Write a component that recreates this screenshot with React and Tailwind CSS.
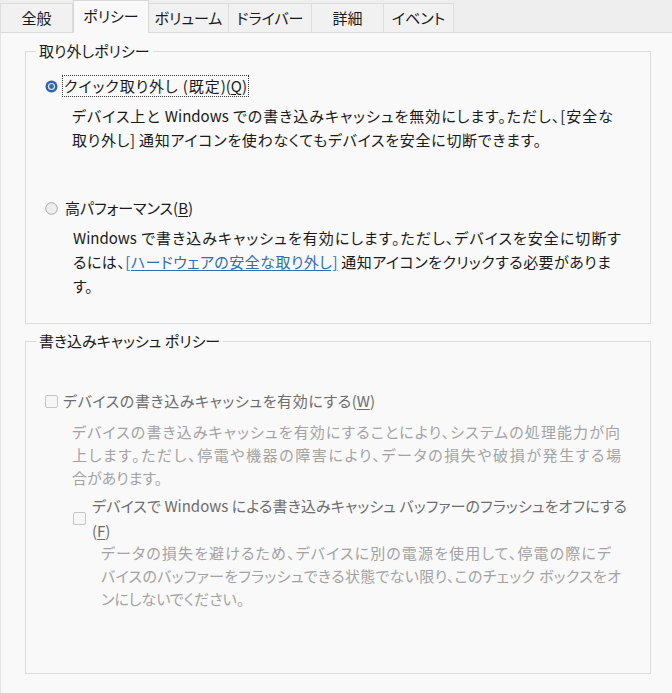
import React from 'react';

function Radio({ checked }) {
  if (checked) {
    return (
      <svg width="13" height="13" viewBox="0 0 13 13" className="shrink-0">
        <circle cx="6.5" cy="6.5" r="6" fill="#2d64a8" />
        <circle cx="6.5" cy="6.5" r="3.6" fill="#dfe9f5" />
        <circle cx="6.5" cy="6.5" r="2.4" fill="#2f6fba" />
      </svg>
    );
  }
  return (
    <svg width="13" height="13" viewBox="0 0 13 13" className="shrink-0">
      <circle cx="6.5" cy="6.5" r="5.8" fill="#ededed" stroke="#a9a9a9" strokeWidth="1" />
    </svg>
  );
}

function Check() {
  return <span className="block h-[13px] w-[13px] shrink-0 rounded-[2px] border border-[#c6c6c6] bg-[#f6f6f6]" />;
}

function Line({ w, children }) {
  return <span className={`block ${w} [text-align-last:justify]`}>{children}</span>;
}

const tabs = [
  { label: '全般', cls: 'w-[73px] border-l' },
  { label: 'ポリシー', cls: 'w-[76px]', active: true },
  { label: 'ボリューム', cls: 'w-[80px]' },
  { label: 'ドライバー', cls: 'w-[83px]' },
  { label: '詳細', cls: 'w-[72px]' },
  { label: 'イベント', cls: 'w-[70px]' },
];

export default function App() {
  return (
    <div
      className="h-[693px] w-[672px] overflow-hidden bg-[#f9f9f9] text-[15px] text-[#1a1a1a] [font-feature-settings:'palt']"
      style={{ fontFamily: "'Noto Sans CJK JP', 'Noto Sans', sans-serif" }}
    >
      <div className="flex h-[33px] items-end border-b border-[#dadada] bg-[#eeeeee]">
        {tabs.map((t) =>
          t.active ? (
            <div
              key={t.label}
              className={`${t.cls} -mb-px flex h-[33px] items-center justify-center border-x border-t border-[#d8d8d8] bg-[#f9f9f9] pb-[2px]`}
            >
              {t.label}
            </div>
          ) : (
            <div
              key={t.label}
              className={`${t.cls} flex h-[29px] items-center justify-center border-r border-t border-[#dcdcdc] bg-[#f1f1f1]`}
            >
              {t.label}
            </div>
          )
        )}
      </div>

      <div className="h-[660px] border-l border-[#e4e4e4] pl-[24px] pt-[8px]">
        <fieldset className="w-[626px] border border-[#dcdcdc]">
          <legend className="ml-[10px] px-[3px] leading-[20px]">取り外しポリシー</legend>
          <div className="pb-[25px] pl-[19px]">
            <div className="mt-[14px] flex h-[22px] items-center">
              <Radio checked />
              <span className="ml-[4px] border border-dotted border-[#3a3a3a] px-[1px] leading-[20px]">
                <span className="inline-block w-[183px] [text-align-last:justify]">
                  クイック取り外し (既定)(<span className="underline underline-offset-2">Q</span>)
                </span>
              </span>
            </div>
            <p className="ml-[27px] mt-[7px] leading-[24px]">
              <Line w="w-[541px]">デバイス上と Windows での書き込みキャッシュを無効にします。ただし、[安全な</Line>
              <Line w="w-[469px]">取り外し] 通知アイコンを使わなくてもデバイスを安全に切断できます。</Line>
            </p>
            <div className="mt-[45px] flex h-[22px] items-center">
              <Radio />
              <span className="ml-[4px] border border-transparent px-[2px] leading-[20px]">
                高パフォーマンス(<span className="underline underline-offset-2">B</span>)
              </span>
            </div>
            <p className="ml-[28px] mt-[7px] leading-[24px]">
              <Line w="w-[548px]">Windows で書き込みキャッシュを有効にします。ただし、デバイスを安全に切断す</Line>
              <Line w="w-[538px]">
                るには、<span className="text-[#2f6db5] underline underline-offset-2">[ハードウェアの安全な取り外し]</span>{' '}
                通知アイコンをクリックする必要がありま
              </Line>
              <span className="block">す。</span>
            </p>
          </div>
        </fieldset>

        <fieldset className="mt-[7px] w-[626px] border border-[#dcdcdc]">
          <legend className="ml-[10px] px-[3px] leading-[20px]">書き込みキャッシュ ポリシー</legend>
          <div className="pb-[63px] pl-[19px]">
            <div className="mt-[39px] flex h-[22px] items-center">
              <Check />
              <span className="ml-[5px] leading-[20px] text-[#6d6d6d]">
                <span className="inline-block w-[312px] [text-align-last:justify]">
                  デバイスの書き込みキャッシュを有効にする(<span className="underline underline-offset-2">W</span>)
                </span>
              </span>
            </div>
            <p className="ml-[27px] mt-[8px] leading-[23px] text-[#a3a3a3]">
              <Line w="w-[548px]">デバイスの書き込みキャッシュを有効にすることにより、システムの処理能力が向</Line>
              <Line w="w-[549px]">上します。ただし、停電や機器の障害により、データの損失や破損が発生する場</Line>
              <span className="block">合があります。</span>
            </p>
            <div className="ml-[28px] mt-[4px]">
              <div className="flex items-center">
                <Check />
                <span className="ml-[6px] leading-[25px] text-[#6d6d6d]">
                  <Line w="w-[535px]">デバイスで Windows による書き込みキャッシュ バッファーのフラッシュをオフにする</Line>
                  <span className="block">
                    (<span className="underline underline-offset-2">F</span>)
                  </span>
                </span>
              </div>
              <p className="-mt-[2px] ml-[28px] leading-[23px] text-[#a3a3a3]">
                <Line w="w-[510px]">データの損失を避けるため、デバイスに別の電源を使用して、停電の際にデ</Line>
                <Line w="w-[520px]">バイスのバッファーをフラッシュできる状態でない限り、このチェック ボックスをオ</Line>
                <span className="block">ンにしないでください。</span>
              </p>
            </div>
          </div>
        </fieldset>
      </div>
    </div>
  );
}
